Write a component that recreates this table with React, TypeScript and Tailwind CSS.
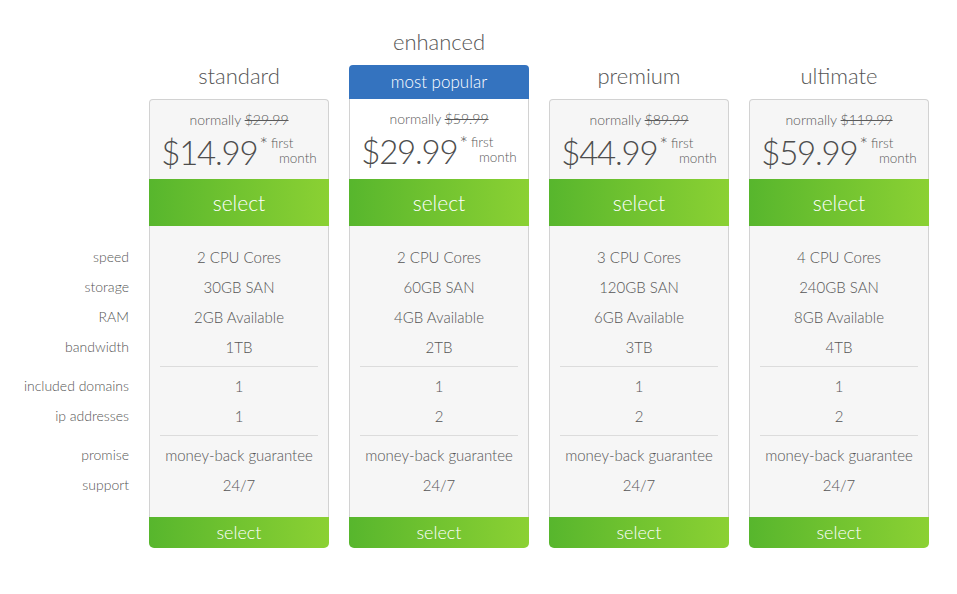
import React from "react";

type Plan = {
  name: string;
  was: string;
  price: string;
  specs: string[];
  extras: string[];
  popular?: boolean;
};

const plans: Plan[] = [
  { name: "standard", was: "$29.99", price: "$14.99", specs: ["2 CPU Cores", "30GB SAN", "2GB Available", "1TB"], extras: ["1", "1"] },
  { name: "enhanced", was: "$59.99", price: "$29.99", specs: ["2 CPU Cores", "60GB SAN", "4GB Available", "2TB"], extras: ["1", "2"], popular: true },
  { name: "premium", was: "$89.99", price: "$44.99", specs: ["3 CPU Cores", "120GB SAN", "6GB Available", "3TB"], extras: ["1", "2"] },
  { name: "ultimate", was: "$119.99", price: "$59.99", specs: ["4 CPU Cores", "240GB SAN", "8GB Available", "4TB"], extras: ["1", "2"] },
];

const Row = ({ children, className = "" }: { children: React.ReactNode; className?: string }) => (
  <div className={`h-[30px] leading-[30px] ${className}`}>{children}</div>
);

const Divider = () => <div className="mx-[10px] my-[4px] h-px bg-[#dcdcdc]" />;

function PlanColumn({ plan }: { plan: Plan }) {
  return (
    <div className="flex w-[180px] flex-col">
      {/* Title + badge */}
      <div className="flex h-[74px] flex-col justify-end">
        <div className="mb-[6px] h-[34px] text-center text-[22px] leading-[34px] text-[#555]">{plan.name}</div>
        {plan.popular && (
          <div className="h-[34px] rounded-t-[4px] bg-[#3473bf] text-center text-[17px] leading-[34px] text-white">
            most popular
          </div>
        )}
      </div>

      {/* Price */}
      <div
        className={`h-[80px] border-x border-[#d2d2d2] ${
          plan.popular ? "bg-white" : "rounded-t-[4px] border-t bg-[#f6f6f6]"
        } flex flex-col items-center pt-[9px]`}
      >
        <div className="text-[14px] leading-[22px] text-[#5a5a5a]">
          normally <span className="line-through">{plan.was}</span>
        </div>
        <div className="mt-[1px] flex items-start">
          <span className="text-[33px] leading-[40px] tracking-[-1.2px] text-[#4d4d4d]">{plan.price}</span>
          <span className="ml-[2px] mt-[2px] text-[20px] leading-[20px] text-[#4d4d4d]">*</span>
          <span className="ml-[3px] mt-[4px] text-[13.5px] leading-[15px] text-[#5a5a5a]">
            first
            <br />
            <span className="pl-[8px]">month</span>
          </span>
        </div>
      </div>

      <button className="h-[47px] bg-gradient-to-r from-[#57b62d] to-[#8bd133] text-[21px] text-white">select</button>

      {/* Features */}
      <div className="border-x border-[#d2d2d2] bg-[#f6f6f6] pb-[17px] pt-[16px] text-center text-[15px] text-[#555]">
        {plan.specs.map((s) => (
          <Row key={s}>{s}</Row>
        ))}
        <Divider />
        {plan.extras.map((s, i) => (
          <Row key={i}>{s}</Row>
        ))}
        <Divider />
        <Row>money-back guarantee</Row>
        <Row>24/7</Row>
      </div>

      <button className="h-[31px] rounded-b-[5px] bg-gradient-to-r from-[#57b62d] to-[#8bd133] text-[18px] text-white">
        select
      </button>
    </div>
  );
}

export default function App() {
  const labels1 = ["speed", "storage", "RAM", "bandwidth"];
  const labels2 = ["included domains", "ip addresses"];
  return (
    <div className="min-h-screen bg-white pt-[25px] font-['Lato',sans-serif] font-light">
      <div className="flex">
        {/* Row labels */}
        <div className="w-[149px] pr-[20px] pt-[217px] text-right text-[14px] text-[#555]">
          {labels1.map((l) => (
            <Row key={l}>{l}</Row>
          ))}
          <div className="h-[9px]" />
          {labels2.map((l) => (
            <Row key={l}>{l}</Row>
          ))}
          <div className="h-[9px]" />
          <Row>promise</Row>
          <Row>support</Row>
        </div>

        <div className="flex gap-[20px]">
          {plans.map((p) => (
            <PlanColumn key={p.name} plan={p} />
          ))}
        </div>
      </div>
    </div>
  );
}
